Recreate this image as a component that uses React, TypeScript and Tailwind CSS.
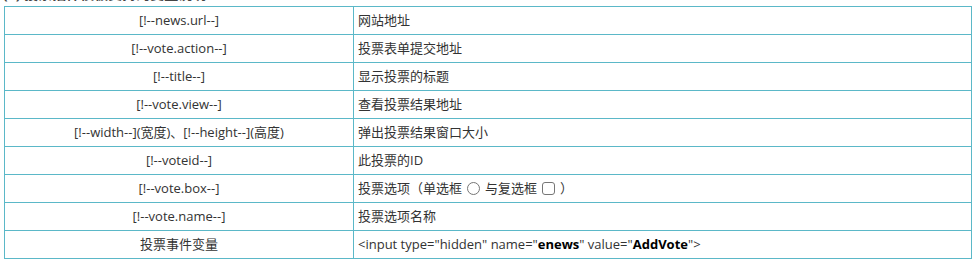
import React from "react";

const rows: [React.ReactNode, React.ReactNode][] = [
  ["[!--news.url--]", "网站地址"],
  ["[!--vote.action--]", "投票表单提交地址"],
  ["[!--title--]", "显示投票的标题"],
  ["[!--vote.view--]", "查看投票结果地址"],
  ["[!--width--](宽度)、[!--height--](高度)", "弹出投票结果窗口大小"],
  ["[!--voteid--]", "此投票的ID"],
  [
    "[!--vote.box--]",
    <span className="inline-flex items-center">
      投票选项（单选框
      <span className="mx-[5px] inline-block h-[13px] w-[13px] rounded-full border border-[#767676] bg-white" />
      与复选框
      <span className="mx-[5px] inline-block h-[13px] w-[13px] rounded-[3px] border border-[#767676] bg-white" />
      ）
    </span>,
  ],
  ["[!--vote.name--]", "投票选项名称"],
  [
    "投票事件变量",
    <span>
      &lt;input type="hidden" name="<b className="text-black">enews</b>" value="
      <b className="text-black">AddVote</b>"&gt;
    </span>,
  ],
];

export default function App() {
  return (
    <div
      className="h-[262px] w-[975px] overflow-hidden bg-white text-[13px] text-[#333]"
      style={{ fontFamily: '"Open Sans", "Noto Sans CJK SC", sans-serif' }}
    >
      <div className="-mt-[15px] h-[19px] pl-[3px] text-[14px] font-bold leading-[18px] text-[#444]">
        (2) 投票插件模板支持的变量说明：
      </div>
      <table className="ml-[4px] mt-[2px] w-[968px] border-collapse">
        <tbody>
          {rows.map(([a, b], i) => (
            <tr key={i} className="h-[28px]">
              <td className="w-[349px] border border-[#5bb8c8] p-0 text-center leading-[27px]">{a}</td>
              <td className="border border-[#5bb8c8] py-0 pl-[4px] leading-[27px]">{b}</td>
            </tr>
          ))}
        </tbody>
      </table>
    </div>
  );
}
